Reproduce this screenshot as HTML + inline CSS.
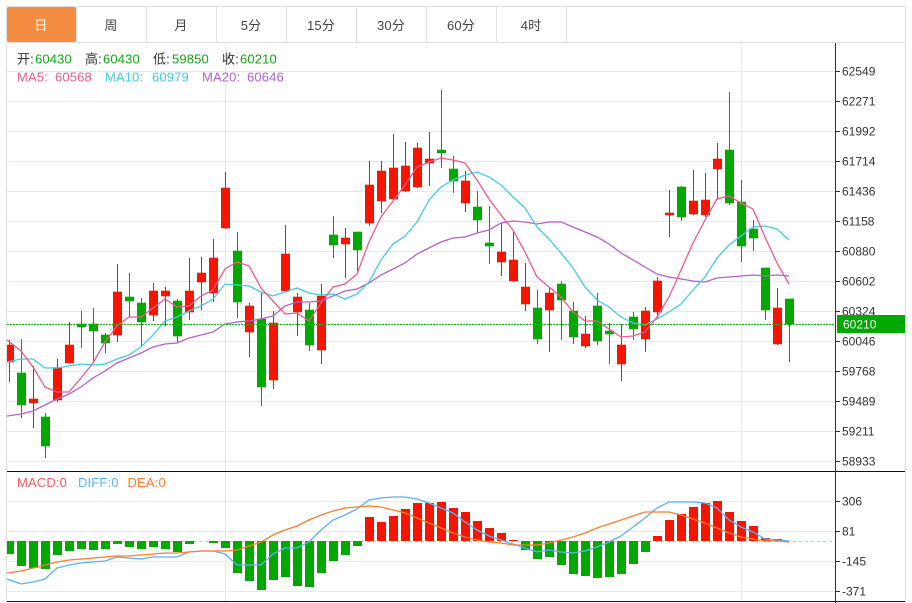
<!DOCTYPE html>
<html><head><meta charset="utf-8"><style>
html,body{margin:0;padding:0;background:#fff;width:912px;height:603px;overflow:hidden}
svg{display:block}
text{font-family:"Liberation Sans","Noto Sans CJK SC",sans-serif;font-size:13px;letter-spacing:.15px}
.t{fill:#444;text-anchor:middle}
.a{font-size:12px;fill:#333;letter-spacing:0}
.g{fill:#12a812}
.k{fill:#333}
</style></head><body>
<svg width="912" height="603" viewBox="0 0 912 603" xmlns="http://www.w3.org/2000/svg">
<defs><clipPath id="c"><rect x="7" y="43" width="828" height="560"/></clipPath></defs>
<!-- frame -->
<path d="M6.5 603V6.5H905.5V603M6 42.5H906M76.5 7V42M146.5 7V42M216.5 7V42M286.5 7V42M356.5 7V42M426.5 7V42M496.5 7V42M566.5 7V42" fill="none" stroke="#dfdfdf" stroke-width="1"/>
<rect x="7" y="7" width="69" height="35" rx="2" fill="#f48c42"/>
<text class="t" x="41" y="30" style="fill:#fff">日</text>
<text class="t" x="111" y="30">周</text>
<text class="t" x="181" y="30">月</text>
<text class="t" x="251" y="30">5分</text>
<text class="t" x="321" y="30">15分</text>
<text class="t" x="391" y="30">30分</text>
<text class="t" x="461" y="30">60分</text>
<text class="t" x="531" y="30">4时</text>
<!-- grid -->
<path d="M7 71.5H835M7 101.5H835M7 131.5H835M7 161.5H835M7 191.5H835M7 221.5H835M7 251.5H835M7 281.5H835M7 311.5H835M7 341.5H835M7 371.5H835M7 401.5H835M7 431.5H835M7 461.5H835M7 501.5H835M7 531.5H835M7 561.5H835M7 591.5H835M225.5 43V601M741.5 43V601" fill="none" stroke="#e4eaef" stroke-width="1"/>
<g clip-path="url(#c)">
<!-- wicks -->
<path fill="none" stroke="#e8190a" stroke-width="1" d="M9.5 340V382M33.5 366V428M57.5 359V402M69.5 322V363M117.5 264V342M153.5 283V321M165.5 287V326M189.5 258V320M201.5 257V310M213.5 239V302M225.5 172V229M249.5 303V357M273.5 311V389M285.5 225V292M297.5 293V336M321.5 284V364M345.5 228V278M369.5 161V226M381.5 161V213M393.5 134V200M405.5 142V192M417.5 143V188M429.5 132V186M465.5 171V212M501.5 223V276M513.5 232V282M525.5 263V311M549.5 287V352M585.5 316V348M621.5 324V381M645.5 307V352M657.5 277V319M669.5 190V237M693.5 170V215M705.5 173V217M717.5 143V200M777.5 288V345"/>
<path fill="none" stroke="#089c08" stroke-width="1" d="M21.5 339V418M45.5 413V458M81.5 311V348M93.5 308V363M105.5 333V353M129.5 273V317M141.5 298V347M177.5 299V342M237.5 232V318M261.5 292V406M309.5 303V351M333.5 216V258M357.5 232V273M441.5 90V168M453.5 156V193M477.5 191V233M489.5 206V264M537.5 290V344M561.5 281V340M573.5 302V344M597.5 293V345M609.5 323V364M633.5 312V340M681.5 186V221M729.5 92V205M741.5 180V262M753.5 220V251M765.5 268V320M789.5 299V362"/>
<!-- bodies -->
<use href="#rb" y="1" opacity=".3"/>
<use href="#rb" y="-1" opacity=".3"/>
<use href="#gb" y="1" opacity=".3"/>
<use href="#gb" y="-1" opacity=".3"/>
<path id="rb" fill="#f51500" d="M5 345h9v17h-9zM29 399h9v4h-9zM53 368h9v32h-9zM65 345h9v18h-9zM113 292h9v43h-9zM149 291h9v24h-9zM161 291h9v5h-9zM185 291h9v21h-9zM197 273h9v9h-9zM209 258h9v35h-9zM221 188h9v40h-9zM245 306h9v26h-9zM269 323h9v57h-9zM281 254h9v37h-9zM293 297h9v15h-9zM317 296h9v54h-9zM341 238h9v6h-9zM365 185h9v38h-9zM377 171h9v30h-9zM389 168h9v31h-9zM401 166h9v25h-9zM413 148h9v39h-9zM425 159h9v4h-9zM461 181h9v22h-9zM497 252h9v10h-9zM509 260h9v21h-9zM521 287h9v17h-9zM545 293h9v17h-9zM581 334h9v12h-9zM617 345h9v19h-9zM641 311h9v28h-9zM653 281h9v31h-9zM665 213h9v2h-9zM689 201h9v13h-9zM701 200h9v15h-9zM713 159h9v10h-9zM773 308h9v36h-9z"/>
<path id="gb" fill="#00a800" d="M17 373h9v32h-9zM41 417h9v29h-9zM77 324h9v3h-9zM89 324h9v7h-9zM101 335h9v8h-9zM125 297h9v4h-9zM137 303h9v19h-9zM173 301h9v35h-9zM233 251h9v51h-9zM257 319h9v68h-9zM305 310h9v35h-9zM329 235h9v10h-9zM353 232h9v18h-9zM437 150h9v3h-9zM449 169h9v12h-9zM473 207h9v13h-9zM485 243h9v3h-9zM533 308h9v31h-9zM557 284h9v16h-9zM569 311h9v26h-9zM593 306h9v35h-9zM605 331h9v3h-9zM629 317h9v12h-9zM677 187h9v30h-9zM725 150h9v53h-9zM737 202h9v44h-9zM749 229h9v9h-9zM761 268h9v42h-9zM785 299h9v25h-9z"/>
<!-- MA lines -->
<polyline fill="none" stroke="#b660cd" stroke-width="1.3" points="7,416 21,414 33,411 45,405 57,399 69,394 81,387 93,378 105,371 117,363 129,358 141,353 153,347 165,344 177,343 189,338 201,335 213,332 225,324 237,322 249,321 261,319 273,316 285,306 297,302 309,302 321,301 333,296 345,291 357,289 369,283 381,275 393,269 405,263 417,254 429,248 441,242 453,238 465,237 477,233 489,230 501,223 513,221 525,222 537,224 549,222 561,222 573,227 585,232 597,237 609,244 621,253 633,260 645,267 657,274 669,277 681,279 693,281 705,282 717,278 729,277 741,276 753,275 765,276 777,275 789,276"/>
<polyline fill="none" stroke="#41cde0" stroke-width="1.3" points="7,362 21,359 33,359 45,368 57,368 69,366 81,364 93,365 105,364 117,359 129,355 141,347 153,335 165,321 177,317 189,311 201,306 213,299 225,284 237,285 249,286 261,292 273,296 285,292 297,288 309,293 321,295 333,294 345,299 357,294 369,282 381,260 393,244 405,236 417,222 429,200 441,187 453,180 465,175 477,172 489,177 501,185 513,197 525,208 537,227 549,239 561,253 573,268 585,287 597,300 609,307 621,317 633,323 645,325 657,319 669,312 681,304 693,290 705,277 717,258 729,245 741,236 753,227 765,226 777,229 789,240"/>
<polyline fill="none" stroke="#ef5a8e" stroke-width="1.3" points="7,340 21,351 33,367 45,387 57,392 69,392 81,378 93,363 105,342 117,326 129,317 141,317 153,308 165,299 177,307 189,306 201,296 213,290 225,269 237,262 249,266 261,288 273,301 285,314 297,313 309,321 321,303 333,287 345,284 357,274 369,242 381,217 393,201 405,185 417,167 429,162 441,158 453,160 465,163 477,180 489,199 501,215 513,230 525,252 537,277 549,287 561,297 573,312 585,321 597,321 609,329 621,337 633,336 645,332 657,317 669,297 681,270 693,243 705,220 717,199 729,196 741,203 753,209 765,237 777,263 789,284"/>
<!-- price line -->
<path d="M7 324.5H835" fill="none" stroke="#1db31d" stroke-width="1" stroke-dasharray="2 1"/>
<!-- MACD -->
<path d="M7 541.5H835" fill="none" stroke="#9fd3ea" stroke-width="1" stroke-dasharray="3 3"/>
<path fill="#f51500" d="M365 517h9v24h-9zM377 522h9v19h-9zM389 516h9v25h-9zM401 509h9v32h-9zM413 503h9v38h-9zM425 503h9v38h-9zM437 502h9v39h-9zM449 508h9v33h-9zM461 512h9v29h-9zM473 521h9v20h-9zM485 528h9v13h-9zM497 533h9v8h-9zM509 540h9v1h-9zM653 536h9v5h-9zM665 520h9v21h-9zM677 514h9v27h-9zM689 507h9v34h-9zM701 503h9v38h-9zM713 501h9v40h-9zM725 512h9v29h-9zM737 521h9v20h-9zM749 526h9v15h-9zM761 538h9v3h-9zM773 539h9v2h-9z"/>
<path fill="#00a800" d="M5 541h9v13h-9zM17 541h9v25h-9zM29 541h9v27h-9zM41 541h9v28h-9zM53 541h9v14h-9zM65 541h9v10h-9zM77 541h9v8h-9zM89 541h9v9h-9zM101 541h9v8h-9zM113 541h9v3h-9zM125 541h9v6h-9zM137 541h9v8h-9zM149 541h9v6h-9zM161 541h9v8h-9zM173 541h9v11h-9zM185 541h9v3h-9zM209 541h9v2h-9zM221 541h9v7h-9zM233 541h9v32h-9zM245 541h9v40h-9zM257 541h9v49h-9zM269 541h9v39h-9zM281 541h9v36h-9zM293 541h9v45h-9zM305 541h9v46h-9zM317 541h9v32h-9zM329 541h9v20h-9zM341 541h9v14h-9zM353 541h9v5h-9zM521 541h9v9h-9zM533 541h9v18h-9zM545 541h9v16h-9zM557 541h9v24h-9zM569 541h9v33h-9zM581 541h9v35h-9zM593 541h9v37h-9zM605 541h9v36h-9zM617 541h9v33h-9zM629 541h9v23h-9zM641 541h9v11h-9z"/>
<polyline fill="none" stroke="#5cb1f5" stroke-width="1.3" points="7,579 21,584 33,582 45,579 57,568 69,565 81,563 93,562 105,561 117,557 129,558 141,559 153,557 165,557 177,557 189,552 201,551 213,551 225,554 237,565 249,565 261,565 273,554 285,548 297,548 309,542 321,530 333,520 345,515 357,509 369,500 381,498 393,497 405,497 417,499 429,503 441,508 453,513 465,522 477,530 489,536 501,540 513,544 525,548 537,552 549,550 561,552 573,553 585,551 597,547 609,542 621,536 633,527 645,518 657,508 669,502 681,502 693,502 705,503 717,508 729,520 741,527 753,532 765,539 777,540 789,541"/>
<polyline fill="none" stroke="#ff7e2d" stroke-width="1.3" points="7,573 21,571 33,568 45,565 57,562 69,560 81,559 93,558 105,557 117,556 129,556 141,555 153,554 165,553 177,553 189,552 201,551 213,551 225,551 237,550 249,546 261,542 273,535 285,530 297,526 309,520 321,515 333,511 345,508 357,507 369,506 381,507 393,510 405,513 417,518 429,523 441,528 453,533 465,537 477,540 489,542 501,543 513,545 525,545 537,545 549,543 561,540 573,537 585,533 597,528 609,524 621,520 633,516 645,512 657,512 669,512 681,515 693,519 705,523 717,528 729,533 741,537 753,539 765,541 777,541 789,542"/>
</g>
<!-- axes -->
<path d="M7 471.5H905M7 601.5H905" stroke="#111" stroke-width="1" fill="none"/>
<path d="M835.5 43V603M836 71.5h4M836 101.5h4M836 131.5h4M836 161.5h4M836 191.5h4M836 221.5h4M836 251.5h4M836 281.5h4M836 311.5h4M836 341.5h4M836 371.5h4M836 401.5h4M836 431.5h4M836 461.5h4M836 501.5h4M836 531.5h4M836 561.5h4M836 591.5h4" stroke="#333" stroke-width="1" fill="none"/>
<text class="a" x="842" y="75.5">62549</text>
<text class="a" x="842" y="105.5">62271</text>
<text class="a" x="842" y="135.5">61992</text>
<text class="a" x="842" y="165.5">61714</text>
<text class="a" x="842" y="195.5">61436</text>
<text class="a" x="842" y="225.5">61158</text>
<text class="a" x="842" y="255.5">60880</text>
<text class="a" x="842" y="285.5">60602</text>
<text class="a" x="842" y="315.5">60324</text>
<text class="a" x="842" y="345.5">60046</text>
<text class="a" x="842" y="375.5">59768</text>
<text class="a" x="842" y="405.5">59489</text>
<text class="a" x="842" y="435.5">59211</text>
<text class="a" x="842" y="465.5">58933</text>
<text class="a" x="842" y="505.5">306</text>
<text class="a" x="842" y="535.5">81</text>
<text class="a" x="842" y="565.5">-145</text>
<text class="a" x="842" y="595.5">-371</text>
<rect x="837" y="315" width="68" height="18" fill="#00a800"/>
<text class="a" x="843" y="328.5" style="fill:#fff">60210</text>
<!-- legend -->
<text class="k" x="17" y="63.5">开:</text><text class="g" x="35" y="63.5">60430</text>
<text class="k" x="85" y="63.5">高:</text><text class="g" x="103" y="63.5">60430</text>
<text class="k" x="153" y="63.5">低:</text><text class="g" x="172" y="63.5">59850</text>
<text class="k" x="222" y="63.5">收:</text><text class="g" x="240" y="63.5">60210</text>
<text x="17" y="81.5" fill="#ef5a8e">MA5:</text><text x="55" y="81.5" fill="#ef5a8e">60568</text>
<text x="105" y="81.5" fill="#41cde0">MA10:</text><text x="152" y="81.5" fill="#41cde0">60979</text>
<text x="202" y="81.5" fill="#b660cd">MA20:</text><text x="247" y="81.5" fill="#b660cd">60646</text>
<text x="17" y="487" fill="#f25c5c">MACD:0</text>
<text x="78" y="487" fill="#5cb1f5">DIFF:0</text>
<text x="127.5" y="487" fill="#ff7e2d">DEA:0</text>
</svg>
</body></html>
